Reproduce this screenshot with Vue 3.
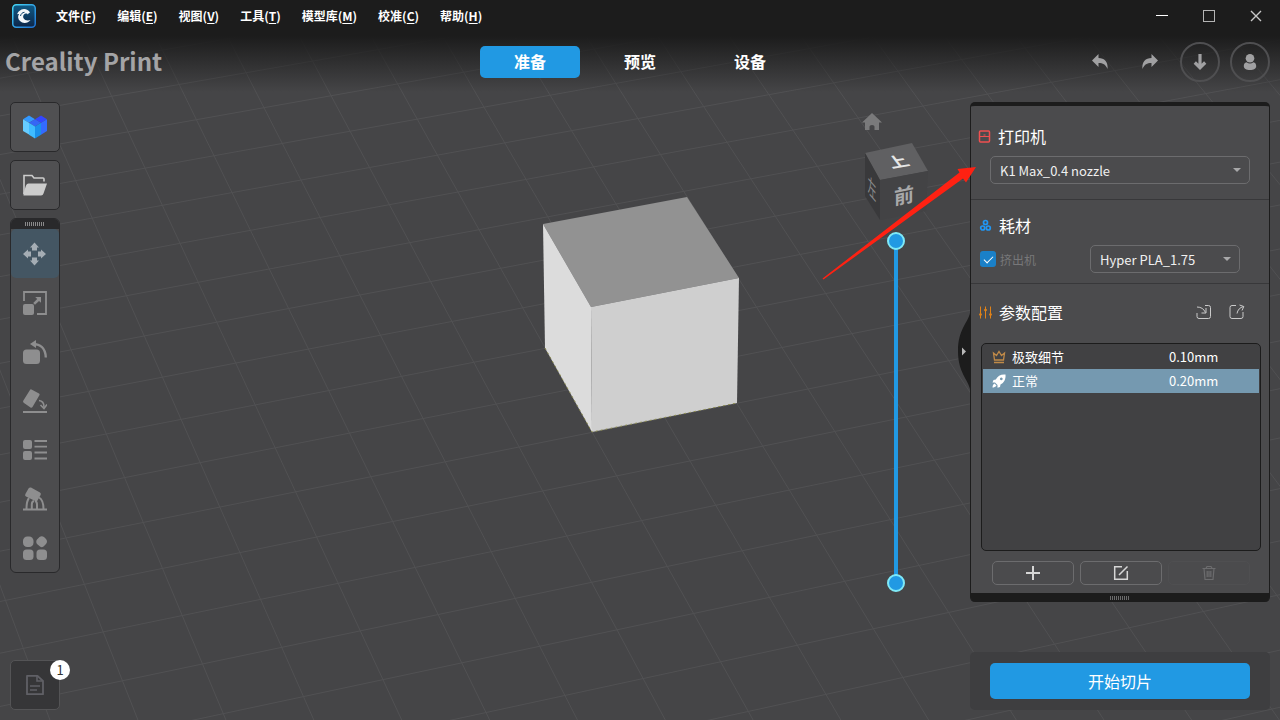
<script setup>
import { ref } from 'vue'

const menus = [
  { label: '文件', key: 'F' },
  { label: '编辑', key: 'E' },
  { label: '视图', key: 'V' },
  { label: '工具', key: 'T' },
  { label: '模型库', key: 'M' },
  { label: '校准', key: 'C' },
  { label: '帮助', key: 'H' },
]
const tabs = ['准备', '预览', '设备']
const activeTab = ref('准备')
const activeTool = ref('move')
const printer = ref('K1 Max_0.4 nozzle')
const material = ref('Hyper PLA_1.75')
const extruder = ref(true)
const layerTop = ref(0)
const layerBottom = ref(100)
const profiles = [
  { name: '极致细节', height: '0.10mm', icon: 'crown' },
  { name: '正常', height: '0.20mm', icon: 'rocket' },
]
const activeProfile = ref('正常')
const tools = [
  { id: 'move', label: '移动' },
  { id: 'scale', label: '缩放' },
  { id: 'rotate', label: '旋转' },
  { id: 'face', label: '放平' },
  { id: 'layout', label: '布局' },
  { id: 'support', label: '支撑' },
  { id: 'more', label: '更多' },
]

// Perspective projection of the build plate: u runs right, v runs towards the viewer.
function project(u, v) {
  const a = 0.00439 * u
  const b = -0.01245 * v
  const w = 1 + a + b
  return [
    ((592.3 + a * 17190 - b * 1340) / w).toFixed(1),
    ((432.3 - a * 2900 - b * 3025) / w).toFixed(1),
  ]
}
const gridLines = []
for (let i = -16; i <= 18; i++) {
  gridLines.push([...project(i, -16), ...project(i, 16)])
  gridLines.push([...project(-16, i), ...project(18, i)])
}
</script>

<template>
  <div class="app">
    <svg class="scene" viewBox="0 0 1280 720" preserveAspectRatio="xMidYMid slice" aria-hidden="true">
      <g stroke="#515153" stroke-width="1">
        <line v-for="(l, i) in gridLines" :key="i" :x1="l[0]" :y1="l[1]" :x2="l[2]" :y2="l[3]" />
      </g>
      <polygon points="543,224 687,197 739,278 591,307" fill="#929292" />
      <polygon points="543,224 591,307 592,432 545,348" fill="#dcdcdc" />
      <polygon points="591,307 739,278 737,403 592,432" fill="#cfcfcf" />
      <path d="M545 348L592 432L737 403" fill="none" stroke="#8c8c50" stroke-width="1" stroke-dasharray="2 3" />
      <path d="M872 113L882 122.500H879V130H874.500V126.500Q874.500 125 872 125Q869.500 125 869.500 126.500V130H865V122.500H862Z" fill="#7a7a7b" />
      <polygon points="865,153 912,143 928,171 880,180" fill="#606062" />
      <polygon points="865,153 880,180 880,220 865,196" fill="#39393b" />
      <polygon points="880,180 928,171 926,211 880,220" fill="#434345" />
      <g font-weight="700" font-size="20" text-anchor="middle">
        <text transform="matrix(0.94 -0.16 0.5 0.66 898 162)" y="7" fill="#e6e6e6">上</text>
        <text transform="matrix(1 -0.2 0 1 904 196)" y="7" fill="#a8a8a9">前</text>
        <text transform="matrix(0.42 0.5 0 1.1 872 189)" y="7" fill="#8a8a8b" font-weight="400">左</text>
      </g>
    </svg>

    <header class="top">
      <div class="titlebar">
        <svg class="logo" viewBox="0 0 24 24" aria-hidden="true">
          <defs>
            <linearGradient id="logoEdge" x1="0" y1="0" x2="1" y2="1">
              <stop offset="0" stop-color="#46d6f5" /><stop offset="1" stop-color="#1d6fd0" />
            </linearGradient>
            <linearGradient id="logoFill" x1="0" y1="0" x2="0" y2="1">
              <stop offset="0" stop-color="#0f5a86" /><stop offset="1" stop-color="#0d2547" />
            </linearGradient>
          </defs>
          <rect x="0.75" y="0.75" width="22.500" height="22.500" rx="3.500" fill="url(#logoFill)" stroke="url(#logoEdge)" stroke-width="1.500" />
          <path d="M18 8.500C16.500 5.500 12.500 4.300 9.500 5.600C7.500 6.500 5.600 8.600 5 10.500C6 10 6.500 10 7 10.200C5.600 12 5.800 15 8 17.100C11 20 16 19.300 18.500 16C15.500 17 12.800 16.300 11.700 14.500C10.500 12.500 11.500 10 13.500 9.500C14.800 9.200 15.500 9.700 15.800 10.400C16.300 9.600 17 9 18 8.500Z" fill="#f4f8fb" />
          <path d="M8.500 12C8.800 10 10.500 8.300 12.500 8.300" stroke="#0e416a" stroke-width="1" fill="none" />
        </svg>
        <nav class="menus">
          <button v-for="m in menus" :key="m.key" type="button">{{ m.label }}(<u>{{ m.key }}</u>)</button>
        </nav>
        <div class="window-controls">
          <button type="button" aria-label="最小化"><svg viewBox="0 0 14 14"><path d="M1 6.500H13" stroke="#fff" /></svg></button>
          <button type="button" aria-label="最大化"><svg viewBox="0 0 14 14"><rect x="1.500" y="1.500" width="11" height="11" fill="none" stroke="#b4b4b4" /></svg></button>
          <button type="button" aria-label="关闭"><svg viewBox="0 0 14 14"><path d="M2 2L12 12M12 2L2 12" stroke="#c8c8c8" stroke-width="1.400" /></svg></button>
        </div>
      </div>
      <div class="navrow">
        <h1>Creality Print</h1>
        <nav class="tabs">
          <button v-for="t in tabs" :key="t" type="button" :class="{ active: t === activeTab }" @click="activeTab = t">{{ t }}</button>
        </nav>
        <div class="actions">
          <button type="button" aria-label="撤销"><svg viewBox="0 0 16 16"><path d="M0 6.500L6.500 0V4C12.500 4 16 7.500 15.600 15C13.500 10.500 11 9 6.500 9V13Z" /></svg></button>
          <button type="button" aria-label="重做"><svg viewBox="0 0 16 16"><path d="M16 6.500L9.500 0V4C3.500 4 0 7.500 0.400 15C2.500 10.500 5 9 9.500 9V13Z" /></svg></button>
          <button type="button" class="round" aria-label="下载"><svg viewBox="0 0 16 16"><path d="M8 0V13M2.800 8.500L8 13.700L13.200 8.500" fill="none" stroke="#a0a0a2" stroke-width="3.200" /></svg></button>
          <button type="button" class="round" aria-label="用户"><svg viewBox="0 0 16 16"><circle cx="8" cy="4.300" r="4.300" /><path d="M4.500 8.300Q8 10.800 11.500 8.300C13.300 8.800 14.200 10.200 14.200 12C14.200 14.800 11.800 16 8 16S1.800 14.800 1.800 12C1.800 10.200 2.700 8.800 4.500 8.300Z" /></svg></button>
        </div>
      </div>
    </header>

    <main class="workspace">
      <aside class="left">
        <button type="button" class="tile" aria-label="模型库">
          <svg viewBox="0 0 24 24">
            <path d="M0 4.200L6 0.500L12 4.200L6 7.800Z" fill="#3399ff" /><path d="M12 4.200L18 0.500L24 4.200L18 7.800Z" fill="#3346ff" />
            <path d="M6 7.800L12 4.200L18 7.800L12 11.500Z" fill="#3566f5" />
            <path d="M0 4.200L6 7.800V19.500L0 16Z" fill="#66ccff" /><path d="M6 7.800L12 11.500V23.500L6 19.800Z" fill="#3fbcff" />
            <path d="M12 11.500L18 7.800V19.800L12 23.500Z" fill="#1a90ea" /><path d="M18 7.800L24 4.200V16L18 19.800Z" fill="#336bff" />
          </svg>
        </button>
        <button type="button" class="tile" aria-label="打开文件">
          <svg viewBox="0 0 24 24"><path d="M1 21V2.500H9L11 5H20Q21 5 21 6V8.500" fill="none" stroke="#ccc" stroke-width="1.600" /><path d="M5.500 10.500H24L20.500 20.500Q20 22.500 18 22.500H0.500V20L3 12.500Q3.700 10.500 5.500 10.500Z" fill="#ccc" /></svg>
        </button>
        <div class="toolbar">
          <div class="grip"></div>
          <button v-for="t in tools" :key="t.id" type="button" :class="{ active: t.id === activeTool }" :aria-label="t.label" @click="activeTool = t.id">
            <svg v-if="t.id === 'move'" viewBox="0 0 24 24"><path d="M11.500 0.500L16 5.500H14V8.500H9V5.500H7Z" /><path d="M11.500 23.500L16 18.500H14V15.500H9V18.500H7Z" /><path d="M0 12L5 7.500V9.500H8V14.500H5V16.500Z" /><path d="M23 12L18 7.500V9.500H15V14.500H18V16.500Z" /></svg>
            <svg v-else-if="t.id === 'scale'" viewBox="0 0 24 24"><path d="M1 10V1H23V23H14" fill="none" stroke="#8e8e8f" stroke-width="1.800" /><rect x="0" y="13" width="11" height="11" rx="2" /><path d="M12.200 6H18V11.800L16 10L12 13.800L10.200 12L14.200 8Z" /></svg>
            <svg v-else-if="t.id === 'rotate'" viewBox="0 0 24 24"><rect x="0" y="9.500" width="17" height="14.500" rx="3.500" /><path d="M10 4C17 4 22.500 8 22.800 17.500" fill="none" stroke="#8e8e8f" stroke-width="2.400" /><path d="M7 4L13 0V8Z" /></svg>
            <svg v-else-if="t.id === 'face'" viewBox="0 0 24 24"><path d="M8.500 0.500L16 4.500Q17 5.200 16.400 6.200L9.500 18Q8.700 19.200 7.500 18.500L1 14Q-0.500 13 0.400 11.500L6.800 1.200Q7.500 0 8.500 0.500Z" /><path d="M16 11.500Q21 12 21 18" fill="none" stroke="#8e8e8f" stroke-width="1.600" /><path d="M17.500 16L21 19.500L24 15.500" fill="none" stroke="#8e8e8f" stroke-width="1.600" /><rect x="0" y="22" width="24" height="2" /></svg>
            <svg v-else-if="t.id === 'layout'" viewBox="0 0 24 24"><rect x="0" y="2" width="9" height="9" rx="2" /><rect x="0" y="13" width="9" height="9" rx="2" /><path d="M11.500 3H24M11.500 8.700H24M11.500 14.500H24M11.500 20.500H24" stroke="#8e8e8f" stroke-width="1.800" /></svg>
            <svg v-else-if="t.id === 'support'" viewBox="0 0 24 24"><path d="M8 0.500L17 5.500Q18.500 6.500 17.600 8L14.500 13.500Q13.700 15 12.200 14L3 9.500Q1.500 8.500 2.400 7L5.500 1.500Q6.500 0 8 0.500Z" /><path d="M3.500 22Q3.500 14 6 11M8.800 22V17.500Q8.800 14.500 11 14M14 22V17.500Q14 14.500 12 14M20.500 22Q20.500 13 16 10.500" fill="none" stroke="#8e8e8f" stroke-width="2" /><rect x="0" y="21.500" width="24" height="2" /></svg>
            <svg v-else viewBox="0 0 24 24"><rect x="0" y="0.500" width="10.500" height="10.500" rx="4.300" /><rect x="0" y="13.500" width="10.500" height="10.500" rx="3.500" /><rect x="13.500" y="13.500" width="10.500" height="10.500" rx="3.500" /><path d="M16.500 1Q18.700 -0.700 21 1L23 3Q25 5.500 23 8L20.500 10.500Q18.700 12 17 10.500L14 8Q12.500 5.500 14 3.500Z" /></svg>
          </button>
        </div>
        <button type="button" class="tile log" aria-label="日志">
          <svg viewBox="0 0 24 24"><path d="M4 2.800H14.500L20 8V21.200H4Z" fill="none" stroke="#606066" stroke-width="1.800" stroke-linejoin="round" /><path d="M14 3V8H20M7 13H17M7 17H14" fill="none" stroke="#606066" stroke-width="1.600" /></svg>
          <span class="badge">1</span>
        </button>
      </aside>

      <div class="layers">
        <input v-model="layerTop" type="range" min="0" max="100" aria-label="顶层" />
        <input v-model="layerBottom" type="range" min="0" max="100" aria-label="底层" />
      </div>

      <aside class="right">
        <div class="panel">
          <button type="button" class="collapse" aria-label="收起">
            <svg viewBox="0 0 12 76"><path d="M12 0C10 10 0 16 0 38S10 66 12 76Z" fill="#1c1c1c" /><path d="M4 34.500L8 38.500L4 42.500Z" fill="#b8b8b8" /></svg>
          </button>
          <section class="printer">
            <h2><svg viewBox="0 0 13 13"><rect x="1.500" y="1" width="10" height="11" rx="1" fill="none" stroke="#f05050" stroke-width="1.500" /><path d="M1.500 6.500H11.500M5.500 5H7.500" stroke="#f05050" /></svg><label for="printer">打印机</label></h2>
            <div class="select">
              <select id="printer" v-model="printer"><option>K1 Max_0.4 nozzle</option></select>
              <svg viewBox="0 0 8 4"><path d="M0 0H8L4 4Z" /></svg>
            </div>
          </section>
          <section class="material">
            <h2><svg viewBox="0 0 13 13" fill="none" stroke="#2196f3" stroke-width="1.700"><circle cx="6.500" cy="3.500" r="2" /><circle cx="3.700" cy="9" r="2" /><circle cx="9.300" cy="9" r="2" /></svg><label for="material">耗材</label></h2>
            <div class="row">
              <label class="check"><input v-model="extruder" type="checkbox" />挤出机</label>
              <div class="select">
                <select id="material" v-model="material"><option>Hyper PLA_1.75</option></select>
                <svg viewBox="0 0 8 4"><path d="M0 0H8L4 4Z" /></svg>
              </div>
            </div>
          </section>
          <section class="params">
            <h2>
              <svg viewBox="0 0 13 13" stroke="#e08218" fill="#e08218"><path d="M1.500 0.500V12.500M6.500 0.500V12.500M11.500 0.500V12.500" /><circle cx="1.500" cy="8.500" r="1" /><circle cx="6.500" cy="4" r="1" /><circle cx="11.500" cy="8.500" r="1" /></svg>参数配置
              <span class="io">
                <button type="button" aria-label="导入"><svg viewBox="0 0 16 16"><path d="M9 1.500H12.500Q14.500 1.500 14.500 3.500V12.500Q14.500 14.500 12.500 14.500H3Q1 14.500 1 12.500V9M1 3Q7 3 9.500 8.500M10 4V9H5.500" /></svg></button>
                <button type="button" aria-label="导出"><svg viewBox="0 0 16 16"><path d="M7 1.500H3Q1 1.500 1 3.500V12.500Q1 14.500 3 14.500H12Q14 14.500 14 12.500V8M8 9.500Q9 4 14.500 2.500M10.500 1L14.800 2.500L13 6.500" /></svg></button>
              </span>
            </h2>
            <ul class="profiles">
              <li v-for="p in profiles" :key="p.name">
                <button type="button" :class="{ active: p.name === activeProfile }" @click="activeProfile = p.name">
                  <svg v-if="p.icon === 'crown'" viewBox="0 0 14 14"><path d="M1.500 3L2.500 10H11.500L12.500 3L9.500 5.500L7 1.500L4.500 5.500Z M2 12.500H12" fill="none" stroke="#c08a48" stroke-width="1.300" /></svg>
                  <svg v-else viewBox="0 0 14 14"><path fill-rule="evenodd" d="M13.500 0.500C14 5 12 9 8.500 10.500L8 13L5.500 13.800L5.500 11L3 8.500H0.500L1.500 6L3.800 5.500C5.500 2 9 0 13.500 0.500ZM9.300 3.500A1.400 1.400 0 1 0 9.310 3.500ZM2.500 9.500L4.500 11.500C3.500 13 2 13.500 0.500 13.500C0.500 12 1 10.500 2.500 9.500Z" fill="#fff" /></svg>
                  <span>{{ p.name }}</span><span>{{ p.height }}</span>
                </button>
              </li>
            </ul>
            <div class="edit">
              <button type="button" aria-label="新增"><svg viewBox="0 0 16 16"><path d="M8 1V15M1 8H15" stroke-width="2" /></svg></button>
              <button type="button" aria-label="编辑"><svg viewBox="0 0 16 16"><path d="M9 1.700H1.700V14.300H14.300V6M6 10L14.500 1.500" stroke-width="1.500" /></svg></button>
              <button type="button" disabled aria-label="删除"><svg viewBox="0 0 16 16"><path d="M1.500 3.500H14.500M5 3.300L6 1.500H10L11 3.300M3 3.500L4 14.500H12L13 3.500M6.200 6V12M8 6V12M9.800 6V12" stroke-width="1.200" /></svg></button>
            </div>
          </section>
          <div class="grip"></div>
        </div>
        <div class="slice"><button type="button">开始切片</button></div>
      </aside>
    </main>

    <svg class="pointer" viewBox="0 0 1280 720" preserveAspectRatio="xMidYMid slice" aria-hidden="true">
      <path d="M822.500 278.500L959.500 172.500L957.500 169L976 167L966 182.500L963 178.500L823.500 279.500Z" fill="#ff2112" />
    </svg>
  </div>
</template>

<style>
html, body { background: #454547; }
</style>

<style scoped>
.app {
  position: relative;
  display: flex;
  flex-direction: column;
  min-height: 100vh;
  box-sizing: border-box;
  overflow: hidden;
  background: #454547;
  color: #fff;
  font-family: "Noto Sans CJK SC", "Noto Sans", sans-serif;
  font-size: 13px;
}
.app * { box-sizing: border-box; }
.scene, .pointer { position: absolute; inset: 0; width: 100%; height: 100%; }
.pointer { pointer-events: none; z-index: 3; }
button { font: inherit; color: inherit; background: none; border: 0; padding: 0; margin: 0; cursor: pointer; }
svg { display: block; flex: none; }
.top { position: relative; background: linear-gradient(#1c1c1c 36px, rgba(28, 28, 28, 0)); }
.titlebar { display: flex; align-items: center; height: 32px; padding: 0 1px 0 12px; }
.logo { width: 24px; height: 24px; }
.menus { display: flex; gap: 21px; margin-left: 20px; font-size: 12px; font-weight: 700; line-height: 20px; }
.menus button { white-space: nowrap; }
.menus u { text-underline-offset: 2px; }
.window-controls { display: flex; margin-left: auto; }
.window-controls button { display: grid; place-items: center; width: 47px; height: 32px; }
.window-controls svg { width: 14px; height: 14px; }
.navrow { display: grid; grid-template-columns: 1fr auto 1fr; align-items: center; height: 60px; padding: 0 5px; }
h1 { margin: 0; padding-bottom: 2px; font-size: 24px; line-height: 32px; font-weight: 700; color: #a4a4a6; }
.tabs { display: flex; gap: 10px; }
.tabs button { width: 100px; height: 32px; border-radius: 5px; font-size: 16px; font-weight: 700; line-height: 30px; padding-bottom: 2px; }
.tabs .active { background: #2199e3; }
.actions { display: flex; justify-content: flex-end; gap: 10px; padding-right: 5px; }
.actions button { display: grid; place-items: center; width: 40px; height: 40px; border-radius: 20px; }
.actions .round { border: 2px solid #4f4f51; }
.actions svg { width: 16px; height: 16px; fill: #a0a0a2; }
.workspace { position: relative; flex: 1; display: flex; padding: 10px; }
.left { display: flex; flex-direction: column; gap: 8px; width: 50px; }
.tile { position: relative; display: grid; place-items: center; width: 50px; height: 50px; border: 1px solid #29292b; border-radius: 5px; background: #505052; }
.tile svg { width: 24px; height: 24px; }
.log { margin-top: auto; background: #363638; border-color: #545456; }
.badge { position: absolute; top: -1px; right: -11px; width: 20px; height: 20px; border-radius: 10px; background: #fff; color: #333; font-size: 13px; line-height: 19px; text-align: center; }
.toolbar { display: flex; flex-direction: column; border: 1px solid #29292b; border-radius: 6px; background: #4c4c4e; overflow: hidden; }
.toolbar .grip { height: 10px; background: #29292b; }
.toolbar button { display: grid; place-items: center; width: 48px; height: 49px; border-radius: 5px; }
.toolbar .active { background: #445663; }
.toolbar svg { width: 24px; height: 24px; fill: #8e8e8f; }
.toolbar .active svg { fill: #a5adb4; }
.grip { display: grid; place-items: center; }
.grip::before { content: ""; width: 20px; height: 4px; background: repeating-linear-gradient(90deg, #8a8a8b 0 1px, transparent 1px 2px); }
.layers { position: relative; width: 18px; height: 360px; margin: 130px 65px 0 auto; }
.layers::before { content: ""; position: absolute; inset: 9px 7px; background: #2199e3; }
.layers input { position: absolute; inset: 0; width: 18px; height: 360px; margin: 0; writing-mode: vertical-lr; appearance: none; background: none; pointer-events: none; }
.layers input::-webkit-slider-thumb { appearance: none; width: 18px; height: 18px; border: 2px solid #7fe9f7; border-radius: 9px; background: #2199e3; pointer-events: auto; }
.right { display: flex; flex-direction: column; justify-content: space-between; gap: 20px; width: 300px; }
.panel { position: relative; border: 1px solid #1c1c1c; border-top-width: 4px; border-bottom: 0; border-radius: 5px; background: #4b4b4d; }
.panel > .grip { height: 9px; background: #1c1c1c; border-radius: 0 0 4px 4px; }
.panel > .grip::before { background: repeating-linear-gradient(90deg, #6a6a6b 0 1px, transparent 1px 2px); }
.collapse { position: absolute; top: 207px; left: -13px; width: 12px; height: 76px; }
.collapse svg { width: 12px; height: 76px; }
section { border-bottom: 1px solid #38383a; }
h2 { display: flex; align-items: center; gap: 7px; margin: 0; padding-left: 8px; font-size: 16px; line-height: 24px; font-weight: 400; }
h2 > svg { width: 13px; height: 13px; }
.printer { padding: 18px 0 15px; }
.printer h2 { padding-left: 7px; }
.material { padding: 13px 0 10px; }
.params { padding: 16px 0 8px; border: 0; }
.select { position: relative; }
.select select { width: 100%; height: 28px; padding: 0 30px 0 9px; border: 1px solid #6c6c6e; border-radius: 5px; background: #4b4b4d; color: #f0f0f0; font: inherit; appearance: none; }
.select svg { position: absolute; right: 9px; top: 12px; width: 8px; height: 4px; fill: #a8a8a9; pointer-events: none; }
.printer .select { margin: 8px 19px 0; }
.row { display: flex; align-items: center; justify-content: space-between; margin: 8px 29px 0 9px; }
.row .select { width: 150px; }
.check { display: flex; align-items: center; gap: 4px; color: #777779; font-size: 12px; }
.check input { width: 16px; height: 16px; margin: 0; border-radius: 3px; appearance: none; display: grid; place-items: center; background: #555557; }
.check input:checked { background: #1a80c8; }
.check input:checked::before { content: ""; width: 8px; height: 4px; margin-top: -2px; border: solid #fff; border-width: 0 0 1px 1px; transform: rotate(-45deg); }
.io { display: flex; gap: 17px; margin: 0 24px 0 auto; }
.io svg { width: 16px; height: 16px; fill: none; stroke: #cacaca; }
.profiles { list-style: none; height: 208px; margin: 19px 8px 0 10px; padding: 1px; border: 1px solid #1c1c1c; border-radius: 5px; background: #414143; }
.profiles button { display: grid; grid-template-columns: 14px 151px 1fr; column-gap: 6px; align-items: center; width: 100%; height: 24px; padding-left: 9px; font-size: 13px; line-height: 24px; text-align: left; }
.profiles .active { background: #7599b0; }
.profiles svg { width: 14px; height: 14px; }
.edit { display: grid; grid-template-columns: 1fr 1fr 1fr; gap: 6px; margin: 10px 19px 0 21px; }
.edit button { display: grid; place-items: center; height: 24px; border: 1px solid #6c6c6e; border-radius: 5px; }
.edit svg { width: 16px; height: 16px; fill: none; stroke: #d6d6d6; }
.edit button:disabled { border-color: #4f4f51; }
.edit button:disabled svg { stroke: #6c6c6e; }
.slice { padding: 11px 20px; border-radius: 5px; background: #3e3e40; }
.slice button { width: 100%; height: 36px; border-radius: 5px; background: #2199e3; font-size: 16px; line-height: 36px; }
</style>
